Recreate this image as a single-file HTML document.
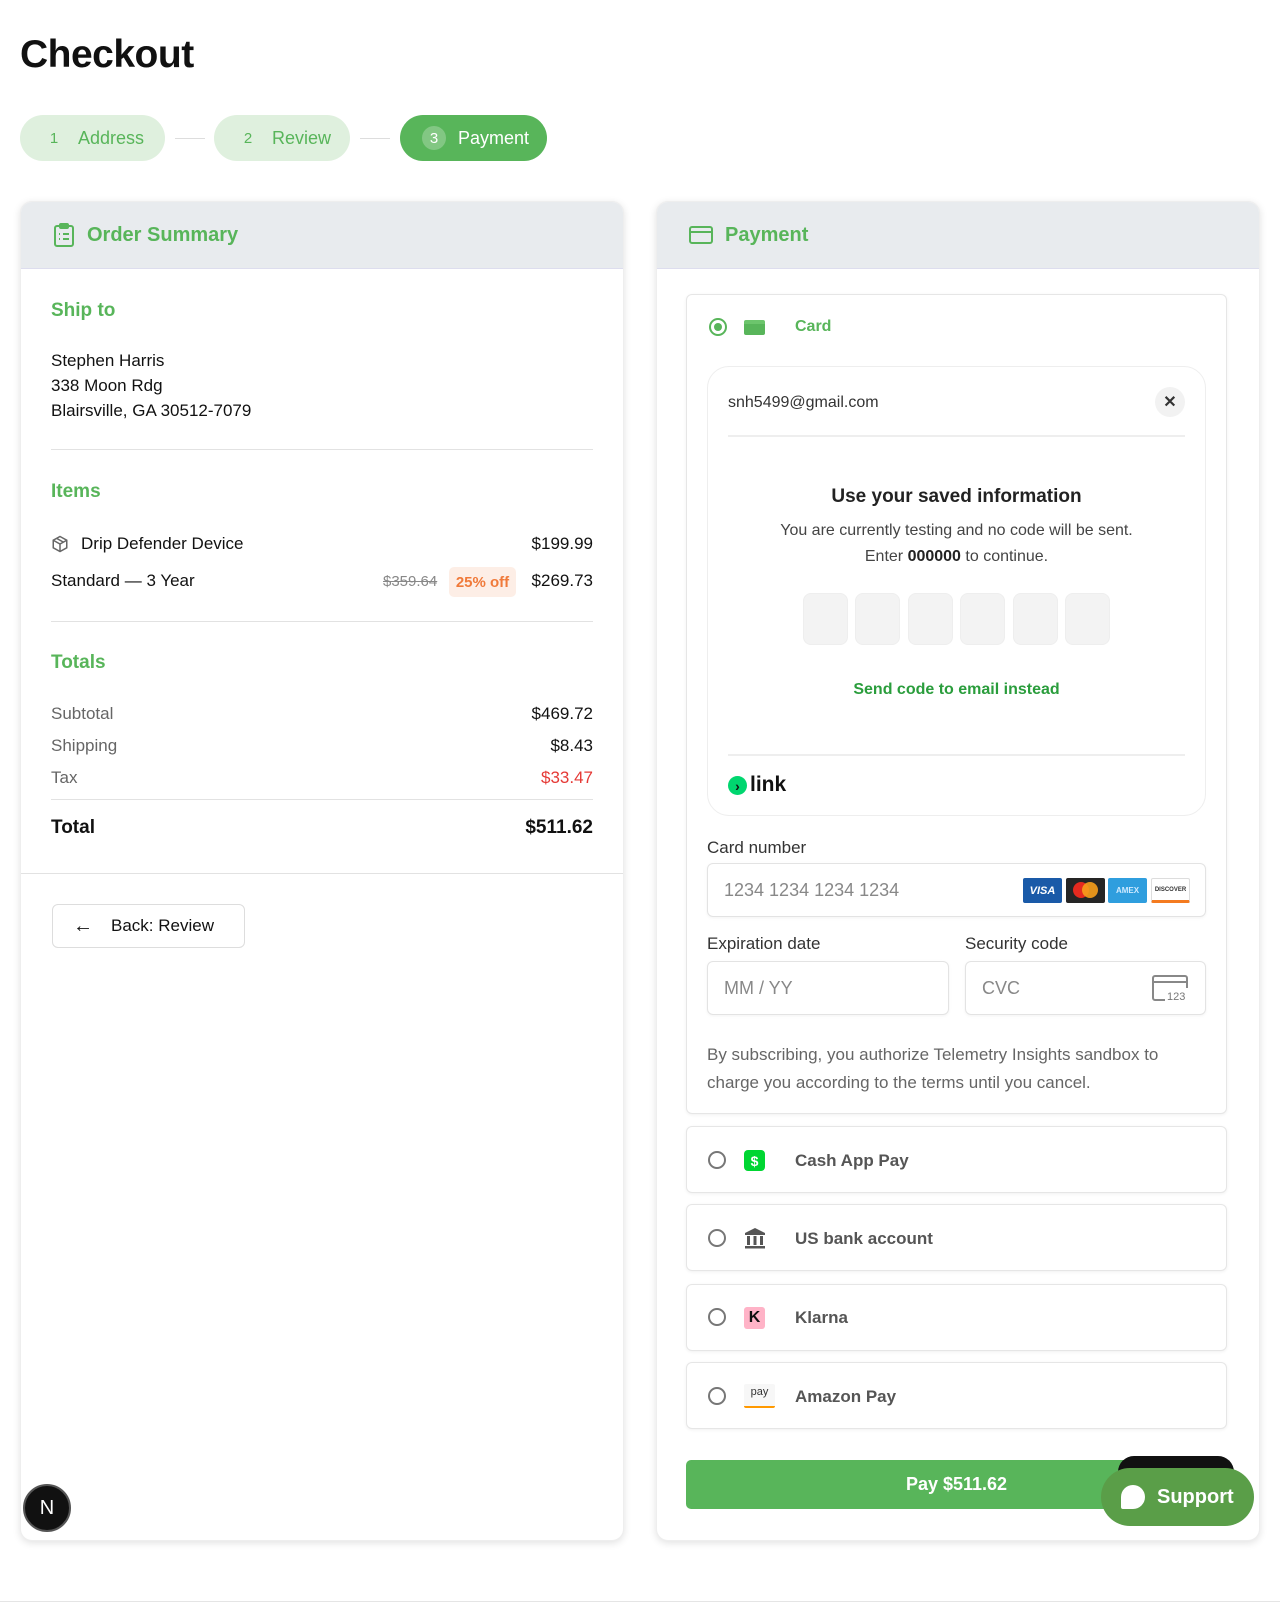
<!DOCTYPE html>
<html><head><meta charset="utf-8"><style>
*{box-sizing:border-box;margin:0;padding:0}
body{width:1280px;height:1617px;background:#fff;font-family:"Liberation Sans",sans-serif;color:#111;position:relative;overflow:hidden}
.a{position:absolute}
.g{color:#58b55a}
.pill{position:absolute;top:115px;height:46px;border-radius:23px;background:#dff0de;color:#58b55a;font-size:18px;display:flex;align-items:center;padding-left:22px}
.pill .n{width:24px;height:24px;border-radius:12px;display:inline-flex;align-items:center;justify-content:center;font-size:15px;margin-right:12px}
.conn{position:absolute;top:138px;height:1px;background:#ddd;width:30px}
.card{position:absolute;top:201px;height:1340px;width:604px;background:#fff;border-radius:12px;box-shadow:0 2px 8px rgba(0,0,0,.12);overflow:hidden;border:1px solid #eee}
.hdr{height:67px;background:#e8ebee;display:flex;align-items:center;padding-left:32px;font-size:20px;font-weight:bold;color:#58b55a;border-bottom:1px solid #dde}
.t{position:absolute;font-size:17px}
.sec{font-size:19px;font-weight:bold;color:#58b55a;position:absolute;left:30px}
.hr{position:absolute;left:30px;right:30px;height:1px;background:#e2e2e2}
.box{position:absolute;left:686px;width:541px;border:1px solid #e6e6e6;border-radius:6px;box-shadow:0 1px 3px rgba(0,0,0,.06);background:#fff}
.radio{position:absolute;width:18px;height:18px;border:2px solid #777;border-radius:50%}
.inp{position:absolute;border:1px solid #e3e3e3;border-radius:6px;box-shadow:0 1px 3px rgba(0,0,0,.05);color:#888;font-size:18px;padding-left:16px;display:flex;align-items:center}
.lbl{position:absolute;font-size:17px;color:#333}
.pm{position:absolute;left:795px;font-size:17px;color:#555;font-weight:bold}
.otp{position:absolute;top:593px;width:45px;height:52px;border-radius:8px;background:#f3f3f3;border:1px solid #eee}
</style></head><body>
<div class="a" style="left:20px;top:33px;font-size:39px;font-weight:bold;letter-spacing:-.5px">Checkout</div>

<div class="pill" style="left:20px;width:145px"><span class="n">1</span>Address</div>
<div class="conn" style="left:175px"></div>
<div class="pill" style="left:214px;width:136px"><span class="n">2</span>Review</div>
<div class="conn" style="left:360px"></div>
<div class="pill" style="left:400px;width:147px;background:#58b55a;color:#fff"><span class="n" style="background:rgba(255,255,255,.25)">3</span>Payment</div>

<div class="card" style="left:20px">
 <div class="hdr"><svg width="22" height="24" viewBox="0 0 22 24" fill="none" stroke="#58b55a" stroke-width="2" style="margin-right:12px"><rect x="2" y="3" width="18" height="20" rx="2"/><rect x="7" y="1" width="8" height="4" rx="1"/><path d="M6 11h1M10 11h6M6 16h1M10 16h6"/></svg>Order Summary</div>
 <div class="sec" style="top:98px">Ship to</div>
 <div class="t" style="left:30px;top:146px;line-height:25px">Stephen Harris<br>338 Moon Rdg<br>Blairsville, GA 30512-7079</div>
 <div class="hr" style="top:247px"></div>
 <div class="sec" style="top:279px">Items</div>
 <svg class="a" style="left:30px;top:333px" width="18" height="18" viewBox="0 0 24 24" fill="none" stroke="#666" stroke-width="2"><path d="M12 2l9 5v10l-9 5-9-5V7z"/><path d="M3 7l9 5 9-5M12 12v10M7.5 4.5l9 5"/></svg>
 <div class="t" style="left:60px;top:332px">Drip Defender Device</div>
 <div class="t" style="right:30px;top:332px">$199.99</div>
 <div class="t" style="left:30px;top:369px">Standard — 3 Year</div>
 <div class="t" style="left:362px;top:371px;font-size:15px;color:#888;text-decoration:line-through">$359.64</div>
 <div class="a" style="left:428px;top:365px;width:67px;height:30px;background:#fdeee6;color:#f07a3a;border-radius:5px;font-size:15px;font-weight:bold;display:flex;align-items:center;justify-content:center">25% off</div>
 <div class="t" style="right:30px;top:369px">$269.73</div>
 <div class="hr" style="top:419px"></div>
 <div class="sec" style="top:450px">Totals</div>
 <div class="t" style="left:30px;top:502px;color:#666">Subtotal</div><div class="t" style="right:30px;top:502px">$469.72</div>
 <div class="t" style="left:30px;top:534px;color:#666">Shipping</div><div class="t" style="right:30px;top:534px">$8.43</div>
 <div class="t" style="left:30px;top:566px;color:#666">Tax</div><div class="t" style="right:30px;top:566px;color:#e53935">$33.47</div>
 <div class="hr" style="top:597px"></div>
 <div class="t" style="left:30px;top:615px;font-weight:bold;font-size:19px">Total</div><div class="t" style="right:30px;top:615px;font-weight:bold;font-size:19px">$511.62</div>
 <div class="a" style="left:0;right:0;top:671px;height:1px;background:#e2e2e2"></div>
 <div class="a" style="left:31px;top:702px;width:193px;height:44px;border:1px solid #ddd;border-radius:6px;font-size:17px;display:flex;align-items:center;padding-left:20px"><span style="font-size:20px;margin-right:18px">←</span>Back: Review</div>
</div>

<div class="card" style="left:656px">
 <div class="hdr"><svg width="24" height="18" viewBox="0 0 24 18" fill="none" stroke="#58b55a" stroke-width="2" style="margin-right:12px"><rect x="1" y="1" width="22" height="16" rx="2"/><path d="M1 6h22"/></svg>Payment</div>
</div>

<div class="box" style="top:294px;height:820px"></div>
<div class="radio" style="left:709px;top:318px;border-color:#58b55a"></div><div class="a" style="left:714px;top:323px;width:8px;height:8px;border-radius:50%;background:#58b55a"></div>
<div class="a" style="left:744px;top:320px;width:21px;height:15px;background:#58b55a;border-radius:2px;border-top:4px solid #6cc56c"></div>
<div class="a g" style="left:795px;top:318px;font-size:16px;font-weight:bold">Card</div>

<div class="a" style="left:707px;top:366px;width:499px;height:450px;border:1px solid #eee;border-radius:22px"></div>
<div class="a" style="left:728px;top:394px;font-size:16px;color:#333">snh5499@gmail.com</div>
<div class="a" style="left:1155px;top:387px;width:30px;height:30px;border-radius:50%;background:#f2f2f2;font-size:16px;font-weight:bold;display:flex;align-items:center;justify-content:center;color:#333">✕</div>
<div class="a" style="left:728px;top:435px;width:457px;height:2px;background:#eee"></div>
<div class="a" style="left:707px;width:499px;top:486px;text-align:center;font-size:19px;font-weight:bold;color:#222">Use your saved information</div>
<div class="a" style="left:707px;width:499px;top:518px;text-align:center;font-size:16px;color:#444;line-height:26px">You are currently testing and no code will be sent.<br>Enter <b style="color:#222">000000</b> to continue.</div>
<div class="otp" style="left:803px"></div><div class="otp" style="left:855px"></div><div class="otp" style="left:908px"></div><div class="otp" style="left:960px"></div><div class="otp" style="left:1013px"></div><div class="otp" style="left:1065px"></div>
<div class="a" style="left:707px;width:499px;top:681px;text-align:center;font-size:16px;font-weight:bold;color:#2a9d3c">Send code to email instead</div>
<div class="a" style="left:728px;top:754px;width:457px;height:2px;background:#eee"></div>
<div class="a" style="left:728px;top:776px;width:19px;height:19px;border-radius:50%;background:#00d66f;color:#111;font-size:14px;font-weight:bold;display:flex;align-items:center;justify-content:center;line-height:1">›</div>
<div class="a" style="left:750px;top:773px;font-size:21px;font-weight:bold;color:#111">link</div>

<div class="lbl" style="left:707px;top:838px">Card number</div>
<div class="inp" style="left:707px;top:863px;width:499px;height:54px">1234 1234 1234 1234</div>
<div class="a" style="left:1023px;top:878px;width:39px;height:25px;background:#1a5aa8;color:#fff;font-size:11px;font-weight:bold;font-style:italic;display:flex;align-items:center;justify-content:center;border-radius:2px">VISA</div>
<div class="a" style="left:1066px;top:878px;width:39px;height:25px;background:#252525;border-radius:2px"><div class="a" style="left:7px;top:4px;width:16px;height:16px;border-radius:50%;background:#e52a1f"></div><div class="a" style="left:16px;top:4px;width:16px;height:16px;border-radius:50%;background:#f79e1b;opacity:.9"></div></div>
<div class="a" style="left:1108px;top:878px;width:39px;height:25px;background:#2f9ede;color:#cfeaff;font-size:8px;font-weight:bold;display:flex;align-items:center;justify-content:center;border-radius:2px">AMEX</div>
<div class="a" style="left:1151px;top:878px;width:39px;height:25px;background:#fff;border:1px solid #ddd;color:#333;font-size:6px;font-weight:bold;display:flex;align-items:center;justify-content:center;border-radius:2px;border-bottom:3px solid #f47b20">DISCOVER</div>

<div class="lbl" style="left:707px;top:934px">Expiration date</div>
<div class="inp" style="left:707px;top:961px;width:242px;height:54px">MM / YY</div>
<div class="lbl" style="left:965px;top:934px">Security code</div>
<div class="inp" style="left:965px;top:961px;width:241px;height:54px">CVC</div>
<svg class="a" style="left:1151px;top:974px" width="40" height="28" viewBox="0 0 40 28" fill="none" stroke="#888" stroke-width="2"><path d="M36 14V4a2 2 0 0 0-2-2H4a2 2 0 0 0-2 2v20a2 2 0 0 0 2 2h10"/><path d="M2 8h34"/><text x="16" y="26" font-size="11" fill="#777" stroke="none" font-family="Liberation Sans">123</text></svg>
<div class="a" style="left:707px;top:1041px;width:500px;font-size:17px;color:#666;line-height:28px">By subscribing, you authorize Telemetry Insights sandbox to charge you according to the terms until you cancel.</div>

<div class="box" style="top:1126px;height:67px"></div>
<div class="radio" style="left:708px;top:1151px"></div>
<div class="a" style="left:744px;top:1150px;width:21px;height:21px;background:#00d632;border-radius:4px;color:#fff;font-weight:bold;font-size:14px;display:flex;align-items:center;justify-content:center">$</div>
<div class="pm" style="top:1151px">Cash App Pay</div>

<div class="box" style="top:1204px;height:67px"></div>
<div class="radio" style="left:708px;top:1229px"></div>
<svg class="a" style="left:744px;top:1227px" width="22" height="22" viewBox="0 0 22 22" fill="#555"><path d="M11 1l10 5v2H1V6z"/><rect x="3" y="9" width="3" height="9"/><rect x="9.5" y="9" width="3" height="9"/><rect x="16" y="9" width="3" height="9"/><rect x="1" y="19" width="20" height="2.5"/></svg>
<div class="pm" style="top:1229px">US bank account</div>

<div class="box" style="top:1284px;height:67px"></div>
<div class="radio" style="left:708px;top:1308px"></div>
<div class="a" style="left:744px;top:1307px;width:21px;height:22px;background:#ffb3c7;border-radius:3px;color:#111;font-weight:bold;font-size:16px;display:flex;align-items:center;justify-content:center">K</div>
<div class="pm" style="top:1308px">Klarna</div>

<div class="box" style="top:1362px;height:67px"></div>
<div class="radio" style="left:708px;top:1387px"></div>
<div class="a" style="left:744px;top:1384px;width:31px;height:24px;background:#f7f7f7;border-radius:2px;font-size:11px;color:#333;text-align:center;line-height:16px;border-bottom:2px solid #f90">pay</div>
<div class="pm" style="top:1387px">Amazon Pay</div>

<div class="a" style="left:686px;top:1460px;width:541px;height:49px;background:#58b55a;border-radius:5px;color:#fff;font-size:18px;font-weight:bold;display:flex;align-items:center;justify-content:center">Pay $511.62</div>
<div class="a" style="left:1118px;top:1456px;width:116px;height:30px;background:#111;border-radius:16px 16px 0 0"></div>
<div class="a" style="left:1101px;top:1468px;width:153px;height:58px;background:#5a9e48;border-radius:29px;color:#fff;font-size:20px;font-weight:bold;display:flex;align-items:center;padding-left:20px"><span style="display:inline-block;width:24px;height:24px;background:#fff;border-radius:12px 12px 12px 2px;margin-right:12px"></span>Support</div>

<div class="a" style="left:23px;top:1484px;width:48px;height:48px;border-radius:50%;background:#111;border:2px solid #555;color:#fff;font-size:20px;display:flex;align-items:center;justify-content:center">N</div>
<div class="a" style="left:0;right:0;top:1601px;height:1px;background:#e5e5e5"></div>
</body></html>
